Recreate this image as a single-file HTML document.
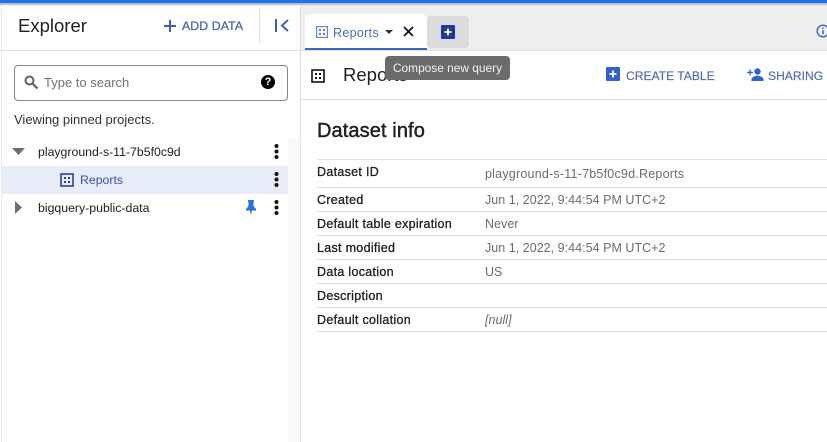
<!DOCTYPE html>
<html><head><meta charset="utf-8">
<style>
html,body{margin:0;padding:0;background:#fff}
body{width:827px;height:442px;overflow:hidden;position:relative;font-family:"Liberation Sans",sans-serif}
.a{position:absolute;white-space:nowrap}
svg{position:absolute;display:block}
.l{position:absolute;background:#dfe1e3}
.k{font-size:12.5px;color:#202124;left:317px;font-weight:400;-webkit-text-stroke:.3px #202124;letter-spacing:.3px}
.v{font-size:12.5px;color:#6a6c6f;left:485px;letter-spacing:.03px}
</style></head><body>
<div class="a" style="left:0;top:0;width:827px;height:3px;background:#1a73e8"></div>
<div class="a" style="left:0;top:3px;width:827px;height:3px;background:linear-gradient(#aaa,#eee)"></div>
<div class="l" style="left:1px;top:6px;width:1px;height:436px;background:#ececec"></div>
<div class="a" style="left:18px;top:15px;font-size:18.5px;color:#202124">Explorer</div>
<svg style="left:162px;top:18px" width="16" height="16" viewBox="0 0 16 16"><path d="M8 2v12M2 8h12" stroke="#3c60b8" stroke-width="2"/></svg>
<div class="a" style="left:182px;top:19px;font-size:12.3px;color:#4a66b5;-webkit-text-stroke:.3px #4a66b5;letter-spacing:.1px">ADD DATA</div>
<div class="l" style="left:259px;top:8px;width:1px;height:36px"></div>
<svg style="left:274px;top:18px" width="16" height="16" viewBox="0 0 16 16"><path d="M2 1v13" stroke="#3c60b8" stroke-width="2"/><path d="M14 2L8 7.500l6 5.500" fill="none" stroke="#3c60b8" stroke-width="2"/></svg>
<div class="l" style="left:0;top:50px;width:301px;height:1px"></div>
<div class="l" style="left:300px;top:6px;width:1px;height:436px"></div>
<div class="a" style="left:14px;top:65px;width:272px;height:34px;border:1px solid #80868b;border-radius:4px"></div>
<svg style="left:23px;top:74px" width="16" height="16" viewBox="0 0 16 16"><circle cx="6.500" cy="6.500" r="4" fill="none" stroke="#5f6368" stroke-width="2"/><path d="M9.500 9.500l5 5" stroke="#5f6368" stroke-width="2.200"/></svg>
<div class="a" style="left:44px;top:75px;font-size:13px;color:#6f7276">Type to search</div>
<div class="a" style="left:261px;top:75px;width:14px;height:14px;border-radius:50%;background:#000;color:#fff;font-size:11px;font-weight:bold;text-align:center;line-height:14px">?</div>
<div class="a" style="left:14px;top:112px;font-size:13px;color:#303134">Viewing pinned projects.</div>
<div class="a" style="left:288px;top:138px;width:12px;height:304px;background:#f8f9fa"></div>
<svg style="left:12px;top:148px" width="13" height="7" viewBox="0 0 13 7"><path d="M0 0h13L6.500 7z" fill="#6b6e72"/></svg>
<div class="a" style="left:38px;top:145px;font-size:12.3px;color:#202124;line-height:15px">playground-s-11-7b5f0c9d</div>
<div class="a" style="left:2px;top:166px;width:286px;height:28px;background:#e8ecf8"></div>
<svg style="left:60px;top:173px" width="14" height="14" viewBox="0 0 14 14"><rect x="1" y="1" width="12" height="12" fill="none" stroke="#2a3f9e" stroke-width="1.600"/><path d="M4 4h2v2H4zM8 4h2v2H8zM4 8h2v2H4zM8 8h2v2H8z" fill="#2a3f9e"/></svg>
<div class="a" style="left:80px;top:173px;font-size:12.3px;color:#3f51a8;line-height:15px">Reports</div>
<svg style="left:15px;top:201px" width="7" height="13" viewBox="0 0 7 13"><path d="M0 0v13l7-6.500z" fill="#6b6e72"/></svg>
<div class="a" style="left:38px;top:201px;font-size:12.3px;color:#202124;line-height:15px">bigquery-public-data</div>
<svg style="left:245px;top:200px" width="12" height="15" viewBox="0 0 12 15"><path d="M3 0h6v1.500L8.500 2v4L11 9v1.500H7L6 15 5 10.500H1V9l2.500-3V2L3 1.500z" fill="#2f6fdc"/></svg>
<svg style="left:273px;top:144px" width="7" height="72" viewBox="0 0 7 72" fill="#111"><circle cx="3.500" cy="2" r="2"/><circle cx="3.500" cy="7.500" r="2"/><circle cx="3.500" cy="13" r="2"/><circle cx="3.500" cy="30" r="2"/><circle cx="3.500" cy="35.500" r="2"/><circle cx="3.500" cy="41" r="2"/><circle cx="3.500" cy="58" r="2"/><circle cx="3.500" cy="63.500" r="2"/><circle cx="3.500" cy="69" r="2"/></svg>
<div class="a" style="left:301px;top:6px;width:526px;height:44px;background:#eeeeef"></div>
<div class="l" style="left:301px;top:50px;width:526px;height:1px"></div>
<div class="a" style="left:305px;top:14px;width:122px;height:36px;background:#fff;border-radius:5px 5px 0 0;box-sizing:border-box;border-bottom:2px solid #3c66c4"></div>
<svg style="left:316px;top:26px" width="12" height="12" viewBox="0 0 12 12"><rect x=".6" y=".6" width="10.800" height="10.800" fill="none" stroke="#5b7fd0" stroke-width="1.100"/><path d="M3 3h2v2H3zM7 3h2v2H7zM3 7h2v2H3zM7 7h2v2H7z" fill="#5b7fd0"/></svg>
<div class="a" style="left:333px;top:26px;font-size:12.5px;color:#4c6cbc;letter-spacing:.3px">Reports</div>
<svg style="left:385px;top:30px" width="8" height="4" viewBox="0 0 8 4"><path d="M0 0h8L4 4z" fill="#333"/></svg>
<svg style="left:403px;top:26px" width="11" height="11" viewBox="0 0 11 11"><path d="M1 1l9 9M10 1l-9 9" stroke="#111" stroke-width="1.700"/></svg>
<div class="a" style="left:427px;top:16px;width:42px;height:32px;background:#dcdcdd;border-radius:4px"></div>
<svg style="left:441px;top:25px" width="14" height="14" viewBox="0 0 14 14"><rect width="14" height="14" rx="1" fill="#1f3a9e"/><path d="M7 3.500v7M3.500 7h7" stroke="#fff" stroke-width="1.800"/></svg>
<svg style="left:816px;top:24px" width="14" height="14" viewBox="0 0 14 14"><circle cx="7" cy="7" r="5.800" fill="none" stroke="#3c66c4" stroke-width="1.400"/><path d="M7 6.200v4M7 3.500v1.500" stroke="#3c66c4" stroke-width="1.500"/></svg>
<svg style="left:311px;top:69px" width="14" height="14" viewBox="0 0 14 14"><rect x="1" y="1" width="12" height="12" fill="none" stroke="#111" stroke-width="1.600"/><path d="M4 4h2v2H4zM8 4h2v2H8zM4 8h2v2H4zM8 8h2v2H8z" fill="#111"/></svg>
<div class="a" style="left:343px;top:64px;font-size:18.5px;color:#202124">Reports</div>
<div class="a" style="left:385px;top:56px;width:125px;height:24px;background:#6b6b6b;border-radius:4px;color:#f2f2f2;font-size:11.9px;line-height:24px;text-align:center">Compose new query</div>
<svg style="left:606px;top:67px" width="14" height="14" viewBox="0 0 14 14"><rect width="14" height="14" rx="1" fill="#3161c9"/><path d="M7 3.500v7M3.500 7h7" stroke="#fff" stroke-width="1.800"/></svg>
<div class="a" style="left:626px;top:69px;font-size:12.1px;color:#5068b8;-webkit-text-stroke:.15px #5068b8">CREATE TABLE</div>
<svg style="left:747px;top:68px" width="17" height="13" viewBox="0 0 17 13" fill="#3161c9"><circle cx="10.500" cy="3.500" r="3.200"/><path d="M4.500 13v-1.500c0-2.500 3.500-3.800 6-3.800s6 1.300 6 3.800V13zM2.500 1.500h1.300v2.300h2.200v1.300H3.800v2.300H2.500V5.100H0V3.800h2.500z"/></svg>
<div class="a" style="left:768px;top:69px;font-size:12.1px;color:#5068b8;-webkit-text-stroke:.15px #5068b8">SHARING</div>
<div class="l" style="left:301px;top:99px;width:526px;height:1px"></div>
<div class="a" style="left:317px;top:120px;font-size:20px;color:#202124;-webkit-text-stroke:.45px #202124;letter-spacing:.1px">Dataset info</div>
<div class="l" style="left:317px;top:159px;width:510px;height:1px"></div>
<div class="l" style="left:317px;top:187px;width:510px;height:1px"></div>
<div class="l" style="left:317px;top:211px;width:510px;height:1px"></div>
<div class="l" style="left:317px;top:235px;width:510px;height:1px"></div>
<div class="l" style="left:317px;top:259px;width:510px;height:1px"></div>
<div class="l" style="left:317px;top:283px;width:510px;height:1px"></div>
<div class="l" style="left:317px;top:307px;width:510px;height:1px"></div>
<div class="l" style="left:317px;top:331px;width:510px;height:1px"></div>
<div class="a k" style="top:165px">Dataset ID</div>
<div class="a v" style="top:167px;letter-spacing:.22px">playground-s-11-7b5f0c9d.Reports</div>
<div class="a k" style="top:193px">Created</div>
<div class="a v" style="top:193px">Jun 1, 2022, 9:44:54 PM UTC+2</div>
<div class="a k" style="top:217px">Default table expiration</div>
<div class="a v" style="top:217px">Never</div>
<div class="a k" style="top:241px">Last modified</div>
<div class="a v" style="top:241px">Jun 1, 2022, 9:44:54 PM UTC+2</div>
<div class="a k" style="top:265px">Data location</div>
<div class="a v" style="top:265px">US</div>
<div class="a k" style="top:289px">Description</div>
<div class="a k" style="top:313px">Default collation</div>
<div class="a v" style="top:313px;font-style:italic">[null]</div>
</body></html>
